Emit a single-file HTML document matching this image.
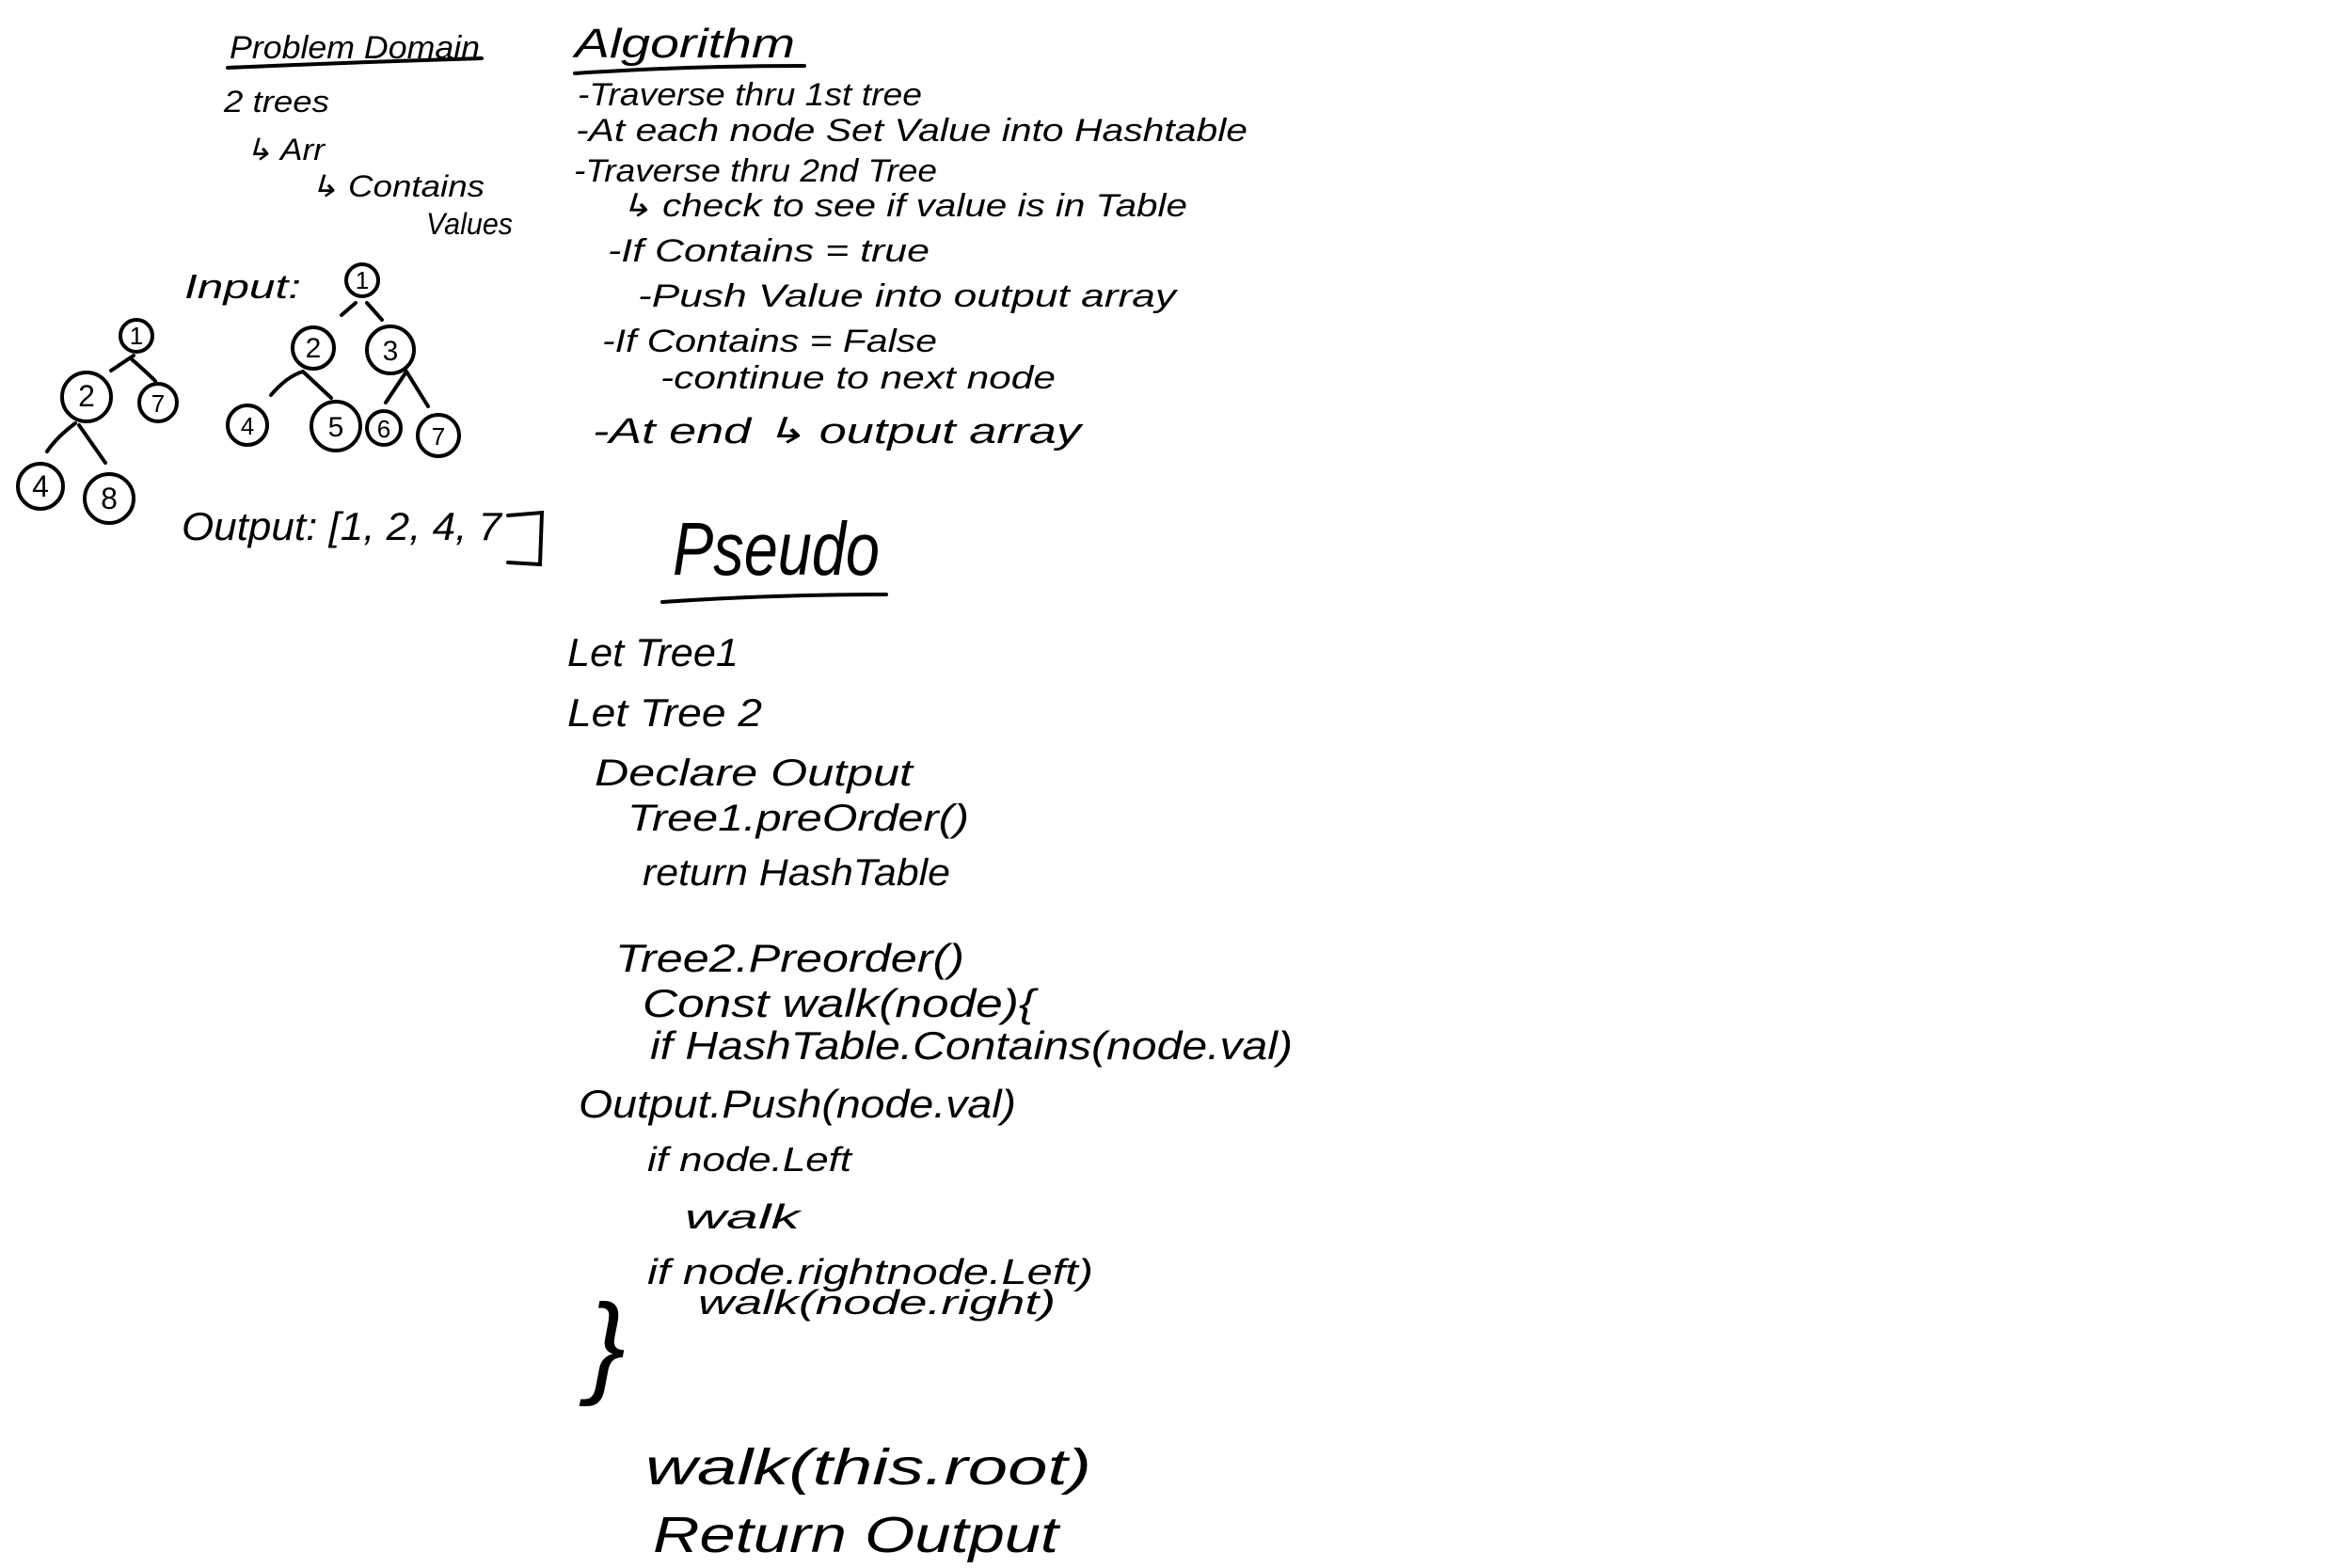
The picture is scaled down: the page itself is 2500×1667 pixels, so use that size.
<!DOCTYPE html>
<html><head><style>html,body{margin:0;padding:0;background:#fff;}svg{display:block}</style></head>
<body>
<svg width="2500" height="1667" viewBox="0 0 2500 1667" xmlns="http://www.w3.org/2000/svg">
<rect width="2500" height="1667" fill="#fff"/>
<g font-family="Liberation Sans, sans-serif" fill="#000" font-style="italic">
<text x="244" y="62" font-size="34" textLength="266" lengthAdjust="spacingAndGlyphs">Problem Domain</text>
<text x="238" y="119" font-size="32" textLength="112" lengthAdjust="spacingAndGlyphs">2 trees</text>
<text x="260" y="170" font-size="32" textLength="85" lengthAdjust="spacingAndGlyphs">↳ Arr</text>
<text x="329" y="209" font-size="32" textLength="186" lengthAdjust="spacingAndGlyphs">↳ Contains</text>
<text x="453" y="249" font-size="32" textLength="92" lengthAdjust="spacingAndGlyphs">Values</text>
<text x="196" y="317" font-size="36" textLength="124" lengthAdjust="spacingAndGlyphs">Input:</text>
<text x="193" y="574" font-size="42" textLength="340" lengthAdjust="spacingAndGlyphs">Output: [1, 2, 4, 7</text>

<text x="611" y="61" font-size="44" textLength="234" lengthAdjust="spacingAndGlyphs">Algorithm</text>
<text x="614" y="112" font-size="34" textLength="366" lengthAdjust="spacingAndGlyphs">-Traverse thru 1st tree</text>
<text x="612" y="150" font-size="34" textLength="714" lengthAdjust="spacingAndGlyphs">-At each node Set Value into Hashtable</text>
<text x="610" y="193" font-size="34" textLength="386" lengthAdjust="spacingAndGlyphs">-Traverse thru 2nd Tree</text>
<text x="659" y="230" font-size="34" textLength="603" lengthAdjust="spacingAndGlyphs">↳ check to see if value is in Table</text>
<text x="646" y="278" font-size="34" textLength="342" lengthAdjust="spacingAndGlyphs">-If Contains = true</text>
<text x="678" y="326" font-size="34" textLength="572" lengthAdjust="spacingAndGlyphs">-Push Value into output array</text>
<text x="640" y="374" font-size="34" textLength="356" lengthAdjust="spacingAndGlyphs">-If  Contains = False</text>
<text x="702" y="413" font-size="34" textLength="420" lengthAdjust="spacingAndGlyphs">-continue to next node</text>
<text x="630" y="471" font-size="38" textLength="519" lengthAdjust="spacingAndGlyphs">-At end ↳ output array</text>

<text x="715" y="611" font-size="80" textLength="220" lengthAdjust="spacingAndGlyphs">Pseudo</text>
<text x="603" y="708" font-size="42" textLength="182" lengthAdjust="spacingAndGlyphs">Let Tree1</text>
<text x="603" y="772" font-size="42" textLength="207" lengthAdjust="spacingAndGlyphs">Let Tree 2</text>
<text x="632" y="835" font-size="40" textLength="338" lengthAdjust="spacingAndGlyphs">Declare Output</text>
<text x="667" y="883" font-size="40" textLength="363" lengthAdjust="spacingAndGlyphs">Tree1.preOrder()</text>
<text x="683" y="941" font-size="40" textLength="327" lengthAdjust="spacingAndGlyphs">return HashTable</text>
<text x="654" y="1033" font-size="42" textLength="371" lengthAdjust="spacingAndGlyphs">Tree2.Preorder()</text>
<text x="683" y="1081" font-size="42" textLength="417" lengthAdjust="spacingAndGlyphs">Const walk(node){</text>
<text x="691" y="1126" font-size="42" textLength="683" lengthAdjust="spacingAndGlyphs">if HashTable.Contains(node.val)</text>
<text x="615" y="1188" font-size="42" textLength="465" lengthAdjust="spacingAndGlyphs">Output.Push(node.val)</text>
<text x="688" y="1245" font-size="36" textLength="217" lengthAdjust="spacingAndGlyphs">if node.Left</text>
<text x="728" y="1306" font-size="36" textLength="122" lengthAdjust="spacingAndGlyphs">walk</text>
<text x="688" y="1365" font-size="38" textLength="474" lengthAdjust="spacingAndGlyphs">if node.rightnode.Left)</text>
<text x="742" y="1397" font-size="36" textLength="380" lengthAdjust="spacingAndGlyphs">walk(node.right)</text>
<text x="625" y="1470" font-size="120">}</text>
<text x="686" y="1578" font-size="54" textLength="474" lengthAdjust="spacingAndGlyphs">walk(this.root)</text>
<text x="694" y="1650" font-size="54" textLength="431" lengthAdjust="spacingAndGlyphs">Return Output</text>
</g>
<g stroke="#000" stroke-width="4" fill="none" stroke-linecap="round">
<path d="M242 72 Q380 66 512 62"/>
<path d="M611 78 Q730 70 855 70"/>
<path d="M704 640 Q820 632 942 632"/>
<path d="M540 548 L576 545 L574 600 L540 598"/>
<circle cx="145" cy="357" r="17"/>
<circle cx="92" cy="422" r="26"/>
<circle cx="168" cy="428" r="20"/>
<circle cx="43" cy="517" r="24"/>
<circle cx="116" cy="530" r="26"/>
<path d="M118 394 L142 378 M140 382 Q155 395 165 405 M80 450 Q60 465 50 480 M84 452 L112 492"/>
<circle cx="385" cy="298" r="17"/>
<circle cx="333" cy="370" r="22"/>
<circle cx="415" cy="372" r="25"/>
<circle cx="263" cy="452" r="21"/>
<circle cx="357" cy="453" r="26"/>
<circle cx="408" cy="455" r="18"/>
<circle cx="466" cy="463" r="22"/>
<path d="M363 335 L378 322 M390 322 L406 340 M288 420 Q305 400 322 395 M322 395 L352 423 M410 428 L432 395 L455 432"/>
</g>
<g font-family="Liberation Sans, sans-serif" font-size="26" text-anchor="middle">
<text x="145" y="366">1</text><text x="92" y="432" font-size="32">2</text><text x="168" y="438">7</text>
<text x="43" y="528" font-size="32">4</text><text x="116" y="541" font-size="32">8</text>
<text x="385" y="307">1</text><text x="333" y="380" font-size="30">2</text><text x="415" y="383" font-size="30">3</text>
<text x="263" y="462">4</text><text x="357" y="464" font-size="30">5</text><text x="408" y="465">6</text><text x="466" y="473">7</text>
</g>
</svg>
</body></html>
